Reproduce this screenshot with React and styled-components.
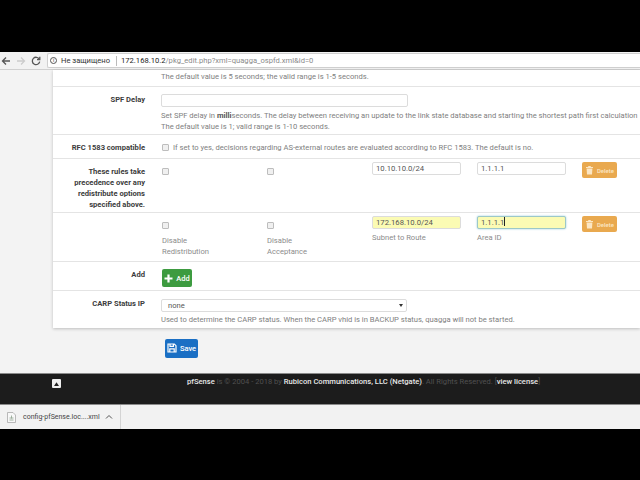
import React from "react";
import styled, { createGlobalStyle } from "styled-components";

const Global = createGlobalStyle`
  html, body { margin: 0; padding: 0; background: #000; }
  body { font-family: Roboto, "Liberation Sans", sans-serif; overflow: hidden; }
`;

const Screen = styled.div`
  width: 640px;
  height: 480px;
  display: flex;
  flex-direction: column;
  background: #000;
  overflow: hidden;
`;

const Letterbox = styled.div`
  height: ${(p) => p.$h}px;
  flex: none;
  background: #000;
`;

const Toolbar = styled.div`
  height: 18px;
  flex: none;
  display: flex;
  align-items: center;
  background: #f2f2f2;
  box-sizing: border-box;
  border-bottom: 1px solid #d0d0d0;
`;

const NavIcons = styled.div`
  width: 47px;
  flex: none;
  display: flex;
  align-items: center;
  gap: 5px;
  padding-left: 1px;
  box-sizing: border-box;
`;

const Omnibox = styled.div`
  flex: 1;
  height: 15px;
  box-sizing: border-box;
  background: #fff;
  border: 1px solid #cfcfcf;
  border-right: none;
  border-radius: 2px 0 0 2px;
  display: flex;
  align-items: center;
  font-size: 7.6px;
  color: #333;
  padding-left: 2px;
`;

const InfoMark = styled.span`
  width: 7px;
  height: 7px;
  border: 1px solid #555;
  border-radius: 50%;
  box-sizing: border-box;
  font-size: 5px;
  line-height: 5px;
  text-align: center;
  margin-right: 4px;
`;

const UrlDivider = styled.span`
  width: 1px;
  height: 10px;
  background: #bbb;
  margin: 0 4px 0 6px;
`;

const UrlHost = styled.span`
  color: #222;
`;

const UrlPath = styled.span`
  color: #8a8a8a;
`;

const Page = styled.div`
  height: 303px;
  flex: none;
  background: #f3f3f3;
  padding-left: 53px;
  box-sizing: border-box;
`;

const Panel = styled.div`
  background: #fff;
  box-shadow: 0 1px 3px rgba(0, 0, 0, 0.22);
`;

const TopHelp = styled.div`
  height: 17px;
  box-sizing: border-box;
  padding: 1px 0 0 108px;
  border-bottom: 1px solid #e4e4e4;
  font-size: 7.6px;
  line-height: 12px;
  color: #808080;
`;

const FieldRow = styled.div`
  display: grid;
  grid-template-columns: 92px 1fr;
  column-gap: 16px;
  height: ${(p) => p.$h}px;
  box-sizing: border-box;
  padding-top: ${(p) => p.$pad ?? 0}px;
  border-bottom: ${(p) => (p.$last ? "none" : "1px solid #e4e4e4")};
  font-size: 7.6px;
  color: #808080;
`;

const Label = styled.div`
  font-weight: 700;
  color: #3c3c3c;
  text-align: right;
  line-height: 11px;
  padding-top: ${(p) => p.$top ?? 0}px;
`;

const Help = styled.div`
  line-height: 11px;
  white-space: nowrap;
  margin-top: ${(p) => p.$top ?? 0}px;
`;

const Strong = styled.b`
  font-weight: 700;
  color: #555;
`;

const Input = styled.div`
  width: ${(p) => p.$w}px;
  height: 13px;
  box-sizing: border-box;
  border: 1px solid ${(p) => (p.$focus ? "#9cc8c8" : "#dcdcdc")};
  border-radius: 2px;
  background: ${(p) => (p.$filled ? "#fbfbb4" : "#fff")};
  box-shadow: ${(p) => (p.$focus ? "0 0 2px #8fc4d8" : "none")};
  color: #555;
  font-size: 7.7px;
  line-height: 11px;
  padding-left: 3px;
`;

const Caret = styled.span`
  display: inline-block;
  width: 1px;
  height: 9px;
  vertical-align: -1px;
  background: #222;
`;

const Check = styled.span`
  display: inline-block;
  width: 7px;
  height: 7px;
  box-sizing: border-box;
  flex: none;
  border: 1px solid #bdbdbd;
  border-radius: 1px;
  background: #f0f0f0;
`;

const InlineCheck = styled.div`
  display: flex;
  align-items: center;
  gap: 4px;
  height: 25px;
  padding-left: 1px;
  white-space: nowrap;
`;

const RuleGrid = styled.div`
  display: grid;
  grid-template-columns: 105px 105px 105px 105px 40px;
  padding: 3px 0 0 1px;
`;

const Cell = styled.div`
  line-height: 11px;
`;

const CheckSlot = styled.div`
  height: 19px;
  display: flex;
  align-items: center;
`;

const Caption = styled.div`
  margin-top: ${(p) => p.$top ?? 0}px;
  color: #8c8c8c;
`;

const Btn = styled.div`
  display: inline-flex;
  align-items: center;
  justify-content: center;
  gap: 3px;
  box-sizing: border-box;
  width: ${(p) => p.$w}px;
  height: ${(p) => p.$h}px;
  background: ${(p) => p.$bg};
  border-radius: 2px;
  color: ${(p) => p.$fg ?? "#fff"};
  font-size: ${(p) => p.$size ?? 7.5}px;
  font-weight: 500;
`;

const AddSlot = styled.div`
  padding-left: 1px;
`;

const SelectBox = styled.div`
  width: 246px;
  height: 13px;
  margin-top: 1px;
  box-sizing: border-box;
  border: 1px solid #dcdcdc;
  border-radius: 2px;
  display: flex;
  align-items: center;
  justify-content: space-between;
  padding: 0 3px 0 6px;
  font-size: 7.6px;
  color: #555;
`;

const SelectArrow = styled.span`
  width: 0;
  height: 0;
  border-left: 2px solid transparent;
  border-right: 2px solid transparent;
  border-top: 3px solid #333;
`;

const SaveRow = styled.div`
  padding: 10px 0 0 112px;
`;

const Footer = styled.div`
  height: 32px;
  flex: none;
  box-sizing: border-box;
  background: #1c1c1c;
  border-top: 1px solid #8a8a8a;
  border-bottom: 1px solid #8a8a8a;
  display: grid;
  grid-template-columns: 187px 1fr;
  font-size: 7.6px;
  color: #505050;
  padding-top: 1px;
`;

const FooterLogo = styled.div`
  padding: 4px 0 0 52px;
`;

const FooterText = styled.div`
  line-height: 12px;
  padding-top: 1px;
  white-space: nowrap;
`;

const FooterStrong = styled.span`
  color: #e8e8e8;
  font-weight: 500;
`;

const DownloadBar = styled.div`
  height: 24px;
  flex: none;
  background: #f2f2f2;
  display: flex;
  align-items: center;
`;

const DownloadItem = styled.div`
  width: 121px;
  height: 100%;
  box-sizing: border-box;
  border-right: 1px solid #d4d4d4;
  display: flex;
  align-items: center;
  padding-left: 7px;
  font-size: 7px;
  color: #444;
  white-space: nowrap;
`;

const FileName = styled.span`
  margin-left: 7px;
  width: 82px;
`;

const Arrow = ({ dir, color }) => (
  <svg width="10" height="10" viewBox="0 0 10 10" fill="none" stroke={color} strokeWidth="1.3">
    <path d={dir === "left" ? "M9 5H1.5M5 1.5L1.5 5L5 8.5" : "M1 5h7.5M5 1.5L8.5 5L5 8.5"} />
  </svg>
);

const Reload = () => (
  <svg width="10" height="10" viewBox="0 0 10 10" fill="none" stroke="#555" strokeWidth="1.3">
    <path d="M8.300 3.200A3.700 3.700 0 1 0 8.700 5.600" />
    <path d="M8.800 0.800V3.600H6" />
  </svg>
);

const Trash = () => (
  <svg width="9" height="10" viewBox="0 0 9 10" fill="#fbe6c4">
    <path d="M1 2h7v.9H1zM3.200 1h2.600v1H3.200zM1.600 3.400h5.800L7 9.400H2z" />
  </svg>
);

const Plus = () => (
  <svg width="9" height="9" viewBox="0 0 9 9" fill="#fff">
    <path d="M3.400 0.500h2.200v2.900h2.900v2.200H5.600v2.900H3.400V5.600H0.500V3.400h2.900z" />
  </svg>
);

const Floppy = () => (
  <svg width="10" height="10" viewBox="0 0 10 10" fill="none" stroke="#fff" strokeWidth="1.2">
    <path d="M1 1h6.300L9 2.700V9H1z" />
    <path d="M3 1v2.400h3.400V1M2.800 9V5.800h4.400V9" />
  </svg>
);

const LogoGlyph = () => (
  <svg width="9" height="9" viewBox="0 0 9 9">
    <rect width="9" height="9" rx="1" fill="#eee" />
    <path d="M2 7L4.500 3.200L7 7z" fill="#222" />
  </svg>
);

const FileIcon = () => (
  <svg width="9" height="11" viewBox="0 0 9 11" fill="none" stroke="#aaa" strokeWidth="0.8">
    <path d="M1 .5h5L8.500 3v7.500H.5V.5z" fill="#f8f8f8" />
    <path d="M2.500 6h4M2.500 8h4M4.500 3.500v3" stroke="#8aa08a" />
  </svg>
);

const Chevron = () => (
  <svg width="8" height="6" viewBox="0 0 8 6" fill="none" stroke="#555" strokeWidth="1">
    <path d="M1 4.500L4 1.500L7 4.500" />
  </svg>
);

const DeleteButton = () => (
  <Btn $w={35} $h={16} $bg="#e9a94f" $fg="#fbe6c4" $size={6}>
    <Trash />
    <span>Delete</span>
  </Btn>
);

export default function App() {
  return (
    <Screen>
      <Global />
      <Letterbox $h={52} />
      <Toolbar>
        <NavIcons>
          <Arrow dir="left" color="#555" />
          <Arrow dir="right" color="#ccc" />
          <Reload />
        </NavIcons>
        <Omnibox>
          <InfoMark>i</InfoMark>
          Не защищено
          <UrlDivider />
          <UrlHost>172.168.10.2</UrlHost>
          <UrlPath>/pkg_edit.php?xml=quagga_ospfd.xml&amp;id=0</UrlPath>
        </Omnibox>
      </Toolbar>
      <Page>
        <Panel>
          <TopHelp>The default value is 5 seconds; the valid range is 1-5 seconds.</TopHelp>
          <FieldRow $h={48} $pad={7}>
            <Label>SPF Delay</Label>
            <div>
              <Input $w={247} />
              <Help $top={3}>
                Set SPF delay in <Strong>milli</Strong>seconds. The delay between receiving an update to the link state database and starting the shortest path first calculation
                <br />
                The default value is 1; valid range is 1-10 seconds.
              </Help>
            </div>
          </FieldRow>
          <FieldRow $h={24}>
            <Label $top={7}>RFC 1583 compatible</Label>
            <InlineCheck>
              <Check />
              If set to yes, decisions regarding AS-external routes are evaluated according to RFC 1583. The default is no.
            </InlineCheck>
          </FieldRow>
          <FieldRow $h={54}>
            <Label $top={7}>
              These rules take
              <br />
              precedence over any
              <br />
              redistribute options
              <br />
              specified above.
            </Label>
            <RuleGrid>
              <Cell><CheckSlot><Check /></CheckSlot></Cell>
              <Cell><CheckSlot><Check /></CheckSlot></Cell>
              <Cell><Input $w={89}>10.10.10.0/24</Input></Cell>
              <Cell><Input $w={89}>1.1.1.1</Input></Cell>
              <Cell><DeleteButton /></Cell>
            </RuleGrid>
          </FieldRow>
          <FieldRow $h={49}>
            <div />
            <RuleGrid>
              <Cell>
                <CheckSlot><Check /></CheckSlot>
                <Caption>Disable<br />Redistribution</Caption>
              </Cell>
              <Cell>
                <CheckSlot><Check /></CheckSlot>
                <Caption>Disable<br />Acceptance</Caption>
              </Cell>
              <Cell>
                <Input $w={89} $filled>172.168.10.0/24</Input>
                <Caption $top={3}>Subnet to Route</Caption>
              </Cell>
              <Cell>
                <Input $w={89} $filled $focus>1.1.1.1<Caret /></Input>
                <Caption $top={3}>Area ID</Caption>
              </Cell>
              <Cell><DeleteButton /></Cell>
            </RuleGrid>
          </FieldRow>
          <FieldRow $h={29} $pad={7}>
            <Label>Add</Label>
            <AddSlot>
              <Btn $w={30} $h={18} $bg="#3d9b40">
                <Plus />
                <span>Add</span>
              </Btn>
            </AddSlot>
          </FieldRow>
          <FieldRow $h={37} $pad={7} $last>
            <Label>CARP Status IP</Label>
            <div>
              <SelectBox>
                none
                <SelectArrow />
              </SelectBox>
              <Help $top={2}>
                Used to determine the CARP status. When the CARP vhid is in BACKUP status, quagga will not be started.
              </Help>
            </div>
          </FieldRow>
        </Panel>
        <SaveRow>
          <Btn $w={33} $h={19} $bg="#1a6fc4">
            <Floppy />
            <span>Save</span>
          </Btn>
        </SaveRow>
      </Page>
      <Footer>
        <FooterLogo>
          <LogoGlyph />
        </FooterLogo>
        <FooterText>
          <FooterStrong>pfSense</FooterStrong> is © 2004 - 2018 by <FooterStrong>Rubicon Communications, LLC (Netgate)</FooterStrong>. All Rights Reserved. [<FooterStrong>view license</FooterStrong>]
        </FooterText>
      </Footer>
      <DownloadBar>
        <DownloadItem>
          <FileIcon />
          <FileName>config-pfSense.loc....xml</FileName>
          <Chevron />
        </DownloadItem>
      </DownloadBar>
      <Letterbox $h={51} />
    </Screen>
  );
}
